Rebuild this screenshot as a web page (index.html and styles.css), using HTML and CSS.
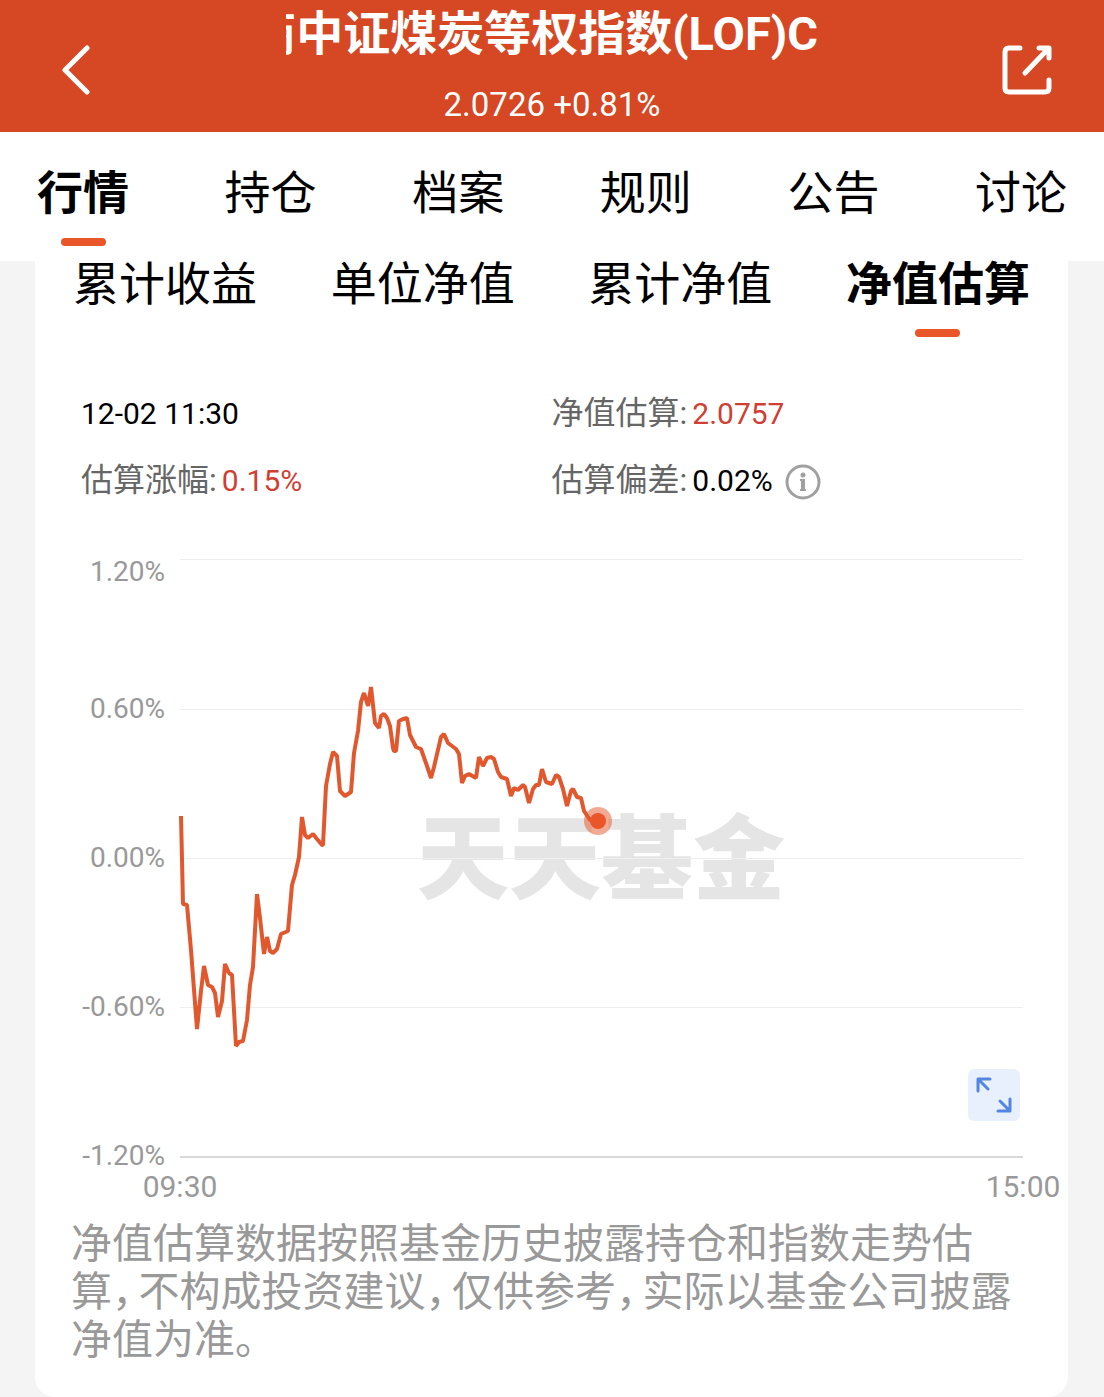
FILE: index.html
```html
<!DOCTYPE html>
<html lang="zh-CN">
<head>
    <meta charset="UTF-8">
    <meta name="viewport" content="width=device-width, initial-scale=1.0">
    <title>净值估算</title>
    <link rel="stylesheet" href="styles.css">
</head>
<body>
    <header class="header">
        <button class="icon-btn btn-back" aria-label="返回">
            <svg width="28" height="50" viewBox="0 0 28 50">
                <path d="M25 3 L3 25 L25 47" fill="none" stroke="#fff" stroke-width="5" stroke-linecap="round" stroke-linejoin="round"/>
            </svg>
        </button>
        <div class="header-info">
            <h1 class="title"><span>商中证煤炭等权指数(LOF)C</span></h1>
            <p class="quote">2.0726 +0.81%</p>
        </div>
        <button class="icon-btn btn-share" aria-label="分享">
            <svg width="50" height="52" viewBox="0 0 50 52">
                <g fill="none" stroke="#fff" stroke-width="5" stroke-linecap="round" stroke-linejoin="round">
                    <path d="M18 4 H7 Q3 4 3 8 V44 Q3 48 7 48 H43 Q47 48 47 44 V36"/>
                    <path d="M23 29 L46 5"/>
                    <path d="M37 4 H47 V14"/>
                </g>
                <path d="M38 4 H47 V13 Z" fill="#fff"/>
            </svg>
        </button>
    </header>

    <nav class="tabs main-tabs">
        <button class="tab active">行情</button>
        <button class="tab">持仓</button>
        <button class="tab">档案</button>
        <button class="tab">规则</button>
        <button class="tab">公告</button>
        <button class="tab">讨论</button>
    </nav>

    <main class="card">
        <nav class="tabs sub-tabs">
            <button class="tab">累计收益</button>
            <button class="tab">单位净值</button>
            <button class="tab">累计净值</button>
            <button class="tab active">净值估算</button>
        </nav>

        <div class="info">
            <div class="item"><span class="value">12-02 11:30</span></div>
            <div class="item"><span class="label">净值估算:</span><span class="value up">2.0757</span></div>
            <div class="item"><span class="label">估算涨幅:</span><span class="value up">0.15%</span></div>
            <div class="item">
                <span class="label">估算偏差:</span><span class="value">0.02%</span>
                <button class="icon-btn btn-info" aria-label="说明">
                    <svg width="36" height="36" viewBox="0 0 36 36">
                        <circle cx="18" cy="18" r="16" fill="none" stroke="#a0a0a0" stroke-width="3"/>
                        <circle cx="18" cy="11" r="2.5" fill="#a0a0a0"/>
                        <path d="M15 15 H20 V25 H21 V27 H15 V25 H16 V17 H15 Z" fill="#a0a0a0"/>
                    </svg>
                </button>
            </div>
        </div>

        <div class="chart">
            <svg class="plot" viewBox="35 515 1033 695">
                <text class="watermark" x="601" y="892" text-anchor="middle">天天基金</text>
                <g class="grid">
                    <path d="M180 559.5 H1023"/>
                    <path d="M180 709.5 H1023"/>
                    <path d="M180 858.5 H1023"/>
                    <path d="M180 1007.5 H1023"/>
                    <path class="base" d="M180 1157 H1023"/>
                </g>
                <g class="axis" text-anchor="end">
                    <text x="165" y="581">1.20%</text>
                    <text x="165" y="718">0.60%</text>
                    <text x="165" y="867">0.00%</text>
                    <text x="165" y="1016">-0.60%</text>
                    <text x="165" y="1165">-1.20%</text>
                </g>
                <g class="axis time" text-anchor="middle">
                    <text x="180" y="1197">09:30</text>
                    <text x="1023" y="1197">15:00</text>
                </g>
                <polyline class="line" points="181,816 183,904 187,905 191,950 197,1029 201,991 204,966 208,985 212,987 215,993 218,1017 222,1001 225,964 229,973 232,975 236,1046 239,1042 243,1041 247,1020 250,985 253,967 257,894 260,918 264,954 267,937 270,951 273,953 277,949 281,934 288,931 292,885 295,875 299,857 302,817 305,835 308,838 313,834 317,839 322,845 323,845 326,786 330,764 333,752 337,756 340,791 345,796 351,792 354,753 358,731 361,702 364,693 368,706 371,687 375,723 379,728 381,716 384,714 387,718 390,726 393,748 394,751 396,751 399,721 403,719 407,718 410,735 416,747 421,749 427,766 431,778 434,767 441,737 444,734 448,743 456,749 459,754 462,783 465,776 469,774 476,778 479,757 483,766 487,758 491,757 494,759 498,772 501,777 507,779 511,796 514,788 518,790 523,785 525,787 529,803 533,789 536,785 539,785 542,769 546,782 552,784 556,775 559,777 563,789 567,806 571,791 573,789 577,797 581,798 584,811 590,820 598,821"/>
                <circle cx="598" cy="821" r="14" fill="#e8562a" fill-opacity="0.5"/>
                <circle cx="598" cy="821" r="8" fill="#e8562a"/>
            </svg>
            <button class="icon-btn btn-expand" aria-label="全屏">
                <svg width="52" height="52" viewBox="0 0 52 52">
                    <g fill="none" stroke="#5286e0" stroke-width="3" stroke-linecap="round" stroke-linejoin="round">
                        <path d="M22 10 H10 V22 M11 11 L20 20"/>
                        <path d="M42 30 V42 H30 M32 32 L41 41"/>
                    </g>
                </svg>
            </button>
        </div>

        <p class="note">净值估算数据按照基金历史披露持仓和指数走势估算<span class="comma">，</span>不构成投资建议<span class="comma">，</span>仅供参考<span class="comma">，</span>实际以基金公司披露净值为准。</p>
    </main>
</body>
</html>
```

FILE: styles.css
```css
* {
    box-sizing: border-box;
}
body {
    margin: 0;
    background: #f4f4f4;
    color: #000;
    font-family: Roboto, "Noto Sans CJK SC", sans-serif;
}
button {
    padding: 0;
    border: 0;
    background: none;
    color: inherit;
    font-family: inherit;
    cursor: pointer;
}
.icon-btn svg {
    display: block;
}

/* header */
.header {
    display: grid;
    grid-template-columns: 1fr minmax(0, 532px) 1fr;
    height: 132px;
    padding: 0 52px;
    background: #d64723;
    color: #fff;
}
.btn-back {
    justify-self: start;
    padding: 8px 0 0 10px;
}
.btn-share {
    justify-self: end;
    padding-top: 8px;
}
.title {
    display: flex;
    justify-content: flex-end;
    overflow: hidden;
    margin: 0;
    font-size: 47px;
    line-height: 68px;
    font-weight: bold;
    white-space: nowrap;
}
.quote {
    margin: 10px 0 0;
    font-size: 33px;
    line-height: 54px;
    text-align: center;
}

/* tabs */
.tabs {
    display: flex;
    justify-content: space-between;
    background: #fff;
}
.main-tabs {
    height: 129px;
    padding: 38px 37px 0;
}
.sub-tabs {
    padding: 0 38px;
}
.tab {
    display: flex;
    flex-direction: column;
    align-items: center;
    gap: 22px;
    height: 76px;
    font-size: 46px;
    line-height: 46px;
}
.tab.active {
    font-weight: bold;
}
.tab.active::after {
    content: "";
    width: 45px;
    height: 8px;
    border-radius: 4px;
    background: #e8562a;
}

/* card */
.card {
    margin: 0 36px 0 35px;
    padding-bottom: 33px;
    border-radius: 0 0 20px 20px;
    background: #fff;
}
.info {
    display: grid;
    grid-template-columns: 1fr 1fr;
    padding: 44px 46px 0;
}
.item {
    display: flex;
    align-items: baseline;
    height: 67px;
    line-height: 66px;
}
.label {
    margin-right: 5px;
    color: #666;
    font-size: 32px;
    line-height: 60px;
}
.value {
    font-size: 30px;
}
.up {
    color: #cf3f33;
}
.btn-info {
    align-self: center;
    margin-left: 12px;
}

/* chart */
.chart {
    position: relative;
}
.plot {
    display: block;
    width: 100%;
}
.grid path {
    stroke: #eee;
    stroke-width: 1;
}
.grid .base {
    stroke: #d8d8d8;
    stroke-width: 2;
}
.axis {
    fill: #999;
    font-size: 28px;
}
.time {
    font-size: 30px;
}
.line {
    fill: none;
    stroke: #e2582e;
    stroke-width: 4;
    stroke-linejoin: bevel;
}
.watermark {
    fill: #e5e5e5;
    font-size: 92px;
    font-weight: 900;
}
.btn-expand {
    position: absolute;
    right: 48px;
    bottom: 89px;
    border-radius: 6px;
    background: #e9f0fd;
}

.note {
    margin: 0;
    padding: 10px 36px 0;
    color: #999;
    font-size: 41px;
    line-height: 48px;
}
.comma {
    margin-right: 6px;
    font-feature-settings: "halt";
}
```
